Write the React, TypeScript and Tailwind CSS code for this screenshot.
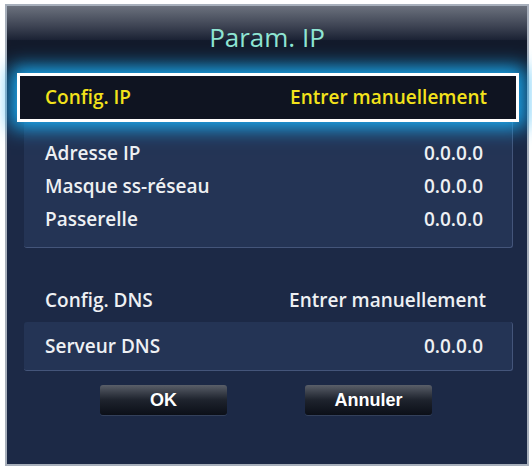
const rows = [
    { label: 'Adresse IP', value: '0.0.0.0' },
    { label: 'Masque ss-réseau', value: '0.0.0.0' },
    { label: 'Passerelle', value: '0.0.0.0' },
]

const font = { fontFamily: '"Open Sans", "Noto Sans", sans-serif' }

const Row = ({ label, value }: { label: string; value: string }) => (
    <div className="flex h-[33px] items-center justify-between pl-[21px] pr-[29px]">
        <span>{label}</span>
        <span>{value}</span>
    </div>
)

const TvButton = ({ children }: { children: string }) => (
    <button className="flex h-[30px] w-[127px] items-center justify-center rounded-[3px] bg-gradient-to-b from-[#5a5f69] via-[#1e232d] to-[#0b0f18] text-[18px] font-bold text-white shadow-[0_1px_0_#33405a] font-['Liberation_Sans',Arial,sans-serif]">
        {children}
    </button>
)

export default function App() {
    return (
        <div className="h-[468px] w-[532px] bg-white pl-[5px] pt-[4px]">
            <div
                className="flex h-[462px] w-[524px] flex-col border-2 border-[#a7afbb] bg-[#1c2946] text-[19px] font-semibold text-[#eef0f3]"
                style={font}
            >
                <div className="flex h-[54px] items-center justify-center bg-[linear-gradient(to_bottom,#6b717d_0%,#3a4050_40%,#1c2335_62%,#131a2b_64%,#131a2b_100%)] pt-[8px]">
                    <span className="text-[26px] font-normal text-[#8fe5d3]">Param. IP</span>
                </div>

                <div className="bg-[linear-gradient(to_bottom,#131a2b_0px,#1c2946_60px)] pt-[13px]">
                    <div className="relative z-10 ml-[10px] mr-[8px] flex h-[49px] items-center justify-between border-[3px] border-white bg-[#0f1421] pl-[25px] pr-[29px] text-[#f3e21b] shadow-[0_0_18px_6px_#19aef5]">
                        <span>Config. IP</span>
                        <span>Entrer manuellement</span>
                    </div>

                    <div className="ml-[17px] mr-[14px] rounded-b-[3px] border-r border-b border-[#44557a] bg-[#243455] pt-[15px] pb-[11px]">
                        {rows.map((r) => (
                            <Row key={r.label} {...r} />
                        ))}
                    </div>
                </div>

                <div className="mt-[36px] flex h-[33px] items-center justify-between pl-[38px] pr-[41px]">
                    <span>Config. DNS</span>
                    <span>Entrer manuellement</span>
                </div>

                <div className="mt-[5px] ml-[17px] mr-[14px] flex h-[49px] items-center justify-between rounded-[3px] border-r border-b border-[#44557a] bg-[#243455] pl-[21px] pr-[29px]">
                    <span>Serveur DNS</span>
                    <span>0.0.0.0</span>
                </div>

                <div className="mt-[14px] flex gap-[78px] pl-[93px]">
                    <TvButton>OK</TvButton>
                    <TvButton>Annuler</TvButton>
                </div>
            </div>
        </div>
    )
}
